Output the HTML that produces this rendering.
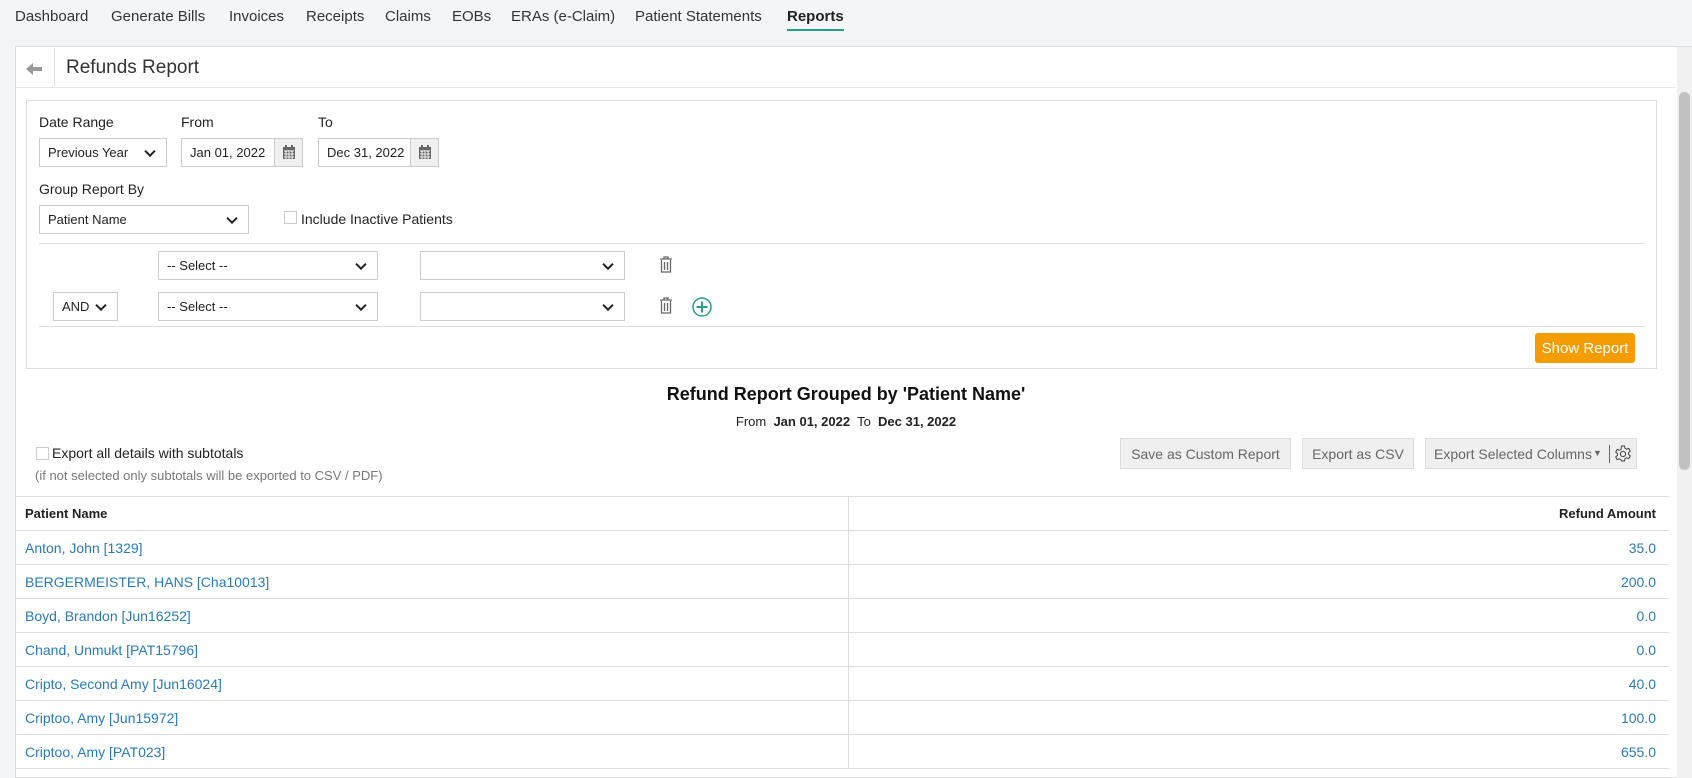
<!DOCTYPE html>
<html><head><meta charset="utf-8"><style>
*{box-sizing:border-box;margin:0;padding:0}
body{width:1692px;height:778px;overflow:hidden;background:#f4f5f7;font-family:"Liberation Sans",sans-serif;font-size:14px;color:#222;position:relative}
.a{position:absolute}
.nav span{position:absolute;top:8px;font-size:15px;color:#333}
.sel,.inp{position:absolute;border:1px solid #ccc;background:#fff;font-size:13px;color:#222;padding-left:8px;display:flex;align-items:center}
.sel:after{content:"";position:absolute;right:12px;top:50%;width:6px;height:6px;border-right:2px solid #222;border-bottom:2px solid #222;transform:translateY(-70%) rotate(45deg)}
.cal{position:absolute;right:0;top:0;bottom:0;width:28px;background:#f0f0f0;border-left:1px solid #ccc}
.btn{position:absolute;background:#efefef;border:1px solid #ddd;color:#666;font-size:14px;display:flex;align-items:center;justify-content:center}
.row{position:absolute;left:16px;width:1653px;height:34px;border-bottom:1px solid #ddd}
.row .n{position:absolute;left:9px;top:9px;color:#2a7ab5;font-size:14px}
.row .v{position:absolute;right:13px;top:9px;color:#2a7ab5;font-size:14px}
.row .d{position:absolute;left:832px;top:0;bottom:0;border-left:1px solid #ddd}
</style></head><body>
<div class="nav">
<span style="left:15px">Dashboard</span><span style="left:111px">Generate Bills</span><span style="left:229px">Invoices</span><span style="left:306px">Receipts</span><span style="left:385px">Claims</span><span style="left:452px">EOBs</span><span style="left:511px">ERAs (e-Claim)</span><span style="left:635px">Patient Statements</span><span style="left:787px;font-weight:bold;color:#222">Reports</span>
</div>
<div class="a" style="left:787px;top:29px;width:57px;height:2px;background:#2a9d8f"></div>
<div class="a" style="left:15px;top:46px;width:1677px;height:732px;background:#fff;border:1px solid #ddd"></div>
<div class="a" style="left:26px;top:62px;width:16px;height:12px"><svg width="16" height="12"><path d="M0 6L7 0V4H16V8H7V12Z" fill="#999"/></svg></div>
<div class="a" style="left:54px;top:48px;height:38px;border-left:1px solid #ddd"></div>
<div class="a" style="left:66px;top:57px;font-size:19px;color:#333">Refunds Report</div>
<div class="a" style="left:16px;top:87px;width:1660px;border-top:1px solid #e6e6e6"></div>
<div class="a" style="left:26px;top:100px;width:1631px;height:269px;border:1px solid #ddd"></div>
<div class="a" style="left:39px;top:114px;font-size:14px">Date Range</div>
<div class="a" style="left:181px;top:114px">From</div>
<div class="a" style="left:318px;top:114px">To</div>
<div class="sel" style="left:39px;top:138px;width:128px;height:29px">Previous Year</div>
<div class="inp" style="left:181px;top:138px;width:122px;height:29px">Jan 01, 2022<div class="cal"><svg width="28" height="27"><rect x="8" y="8" width="12" height="12" fill="#666"/><path d="M9 12h10M9 15h10M9 18h10M11 11v9M14 11v9M17 11v9" stroke="#f0f0f0"/><rect x="10" y="6" width="2" height="3" fill="#666"/><rect x="16" y="6" width="2" height="3" fill="#666"/></svg></div></div>
<div class="inp" style="left:318px;top:138px;width:121px;height:29px">Dec 31, 2022<div class="cal"><svg width="28" height="27"><rect x="8" y="8" width="12" height="12" fill="#666"/><path d="M9 12h10M9 15h10M9 18h10M11 11v9M14 11v9M17 11v9" stroke="#f0f0f0"/><rect x="10" y="6" width="2" height="3" fill="#666"/><rect x="16" y="6" width="2" height="3" fill="#666"/></svg></div></div>
<div class="a" style="left:39px;top:181px">Group Report By</div>
<div class="sel" style="left:39px;top:205px;width:210px;height:29px">Patient Name</div>
<div class="a" style="left:284px;top:211px;width:13px;height:13px;border:1px solid #ccc"></div>
<div class="a" style="left:301px;top:211px;font-size:14px">Include Inactive Patients</div>
<div class="a" style="left:39px;top:243px;width:1606px;border-top:1px solid #ddd"></div>
<div class="sel" style="left:158px;top:251px;width:220px;height:29px">-- Select --</div>
<div class="sel" style="left:420px;top:251px;width:205px;height:29px"></div>
<div class="sel" style="left:53px;top:292px;width:65px;height:29px">AND</div>
<div class="sel" style="left:158px;top:292px;width:220px;height:29px">-- Select --</div>
<div class="sel" style="left:420px;top:292px;width:205px;height:29px"></div>
<svg class="a" style="left:659px;top:256px" width="14" height="17"><path d="M1 3h12M5 3V1h4v2M2.5 4v12h9V4M5.5 6v8M8.5 6v8" stroke="#666" fill="none" stroke-width="1.3"/></svg>
<svg class="a" style="left:659px;top:297px" width="14" height="17"><path d="M1 3h12M5 3V1h4v2M2.5 4v12h9V4M5.5 6v8M8.5 6v8" stroke="#666" fill="none" stroke-width="1.3"/></svg>
<svg class="a" style="left:692px;top:297px" width="20" height="20"><circle cx="10" cy="10" r="9" stroke="#2a9d8f" fill="none" stroke-width="1.5"/><path d="M10 4.5v11M4.5 10h11" stroke="#2a9d8f" stroke-width="2"/></svg>
<div class="a" style="left:39px;top:326px;width:1606px;border-top:1px solid #ddd"></div>
<div class="a" style="left:1535px;top:333px;width:100px;height:30px;background:#f59c00;border-radius:3px;color:#fff;font-size:15px;display:flex;align-items:center;justify-content:center">Show Report</div>
<div class="a" style="left:0;width:1692px;top:384px;text-align:center;font-size:18px;font-weight:bold;color:#111">Refund Report Grouped by 'Patient Name'</div>
<div class="a" style="left:0;width:1692px;top:414px;text-align:center;font-size:13px">From &nbsp;<b>Jan 01, 2022</b>&nbsp; To &nbsp;<b>Dec 31, 2022</b></div>
<div class="a" style="left:36px;top:447px;width:13px;height:13px;border:1px solid #ccc"></div>
<div class="a" style="left:52px;top:445px;font-size:14px">Export all details with subtotals</div>
<div class="a" style="left:35px;top:468px;font-size:13px;color:#777">(if not selected only subtotals will be exported to CSV / PDF)</div>
<div class="btn" style="left:1120px;top:438px;width:171px;height:31px">Save as Custom Report</div>
<div class="btn" style="left:1302px;top:438px;width:112px;height:31px">Export as CSV</div>
<div class="btn" style="left:1425px;top:438px;width:212px;height:31px;justify-content:flex-start;padding-left:8px">Export Selected Columns<span style="position:absolute;left:167px;top:9px;font-size:9px">▼</span><span style="position:absolute;left:183px;top:6px;height:18px;border-left:1px solid #666"></span>
<svg style="position:absolute;left:188px;top:6px" width="18" height="18" viewBox="0 0 18 18"><path d="M7.5 1h3l.5 2.3 1.6.9 2.2-.8 1.5 2.6-1.7 1.6v1.8l1.7 1.6-1.5 2.6-2.2-.8-1.6.9-.5 2.3h-3L7 14.7l-1.6-.9-2.2.8-1.5-2.6 1.7-1.6V8.6L1.7 7 3.2 4.4l2.2.8L7 4.3z" fill="none" stroke="#444" stroke-width="1"/><circle cx="9" cy="9" r="2.6" fill="none" stroke="#444"/></svg></div>
<div class="a" style="left:16px;top:496px;width:1653px;border-top:1px solid #ddd"></div>
<div class="row" style="top:497px"><div class="n" style="color:#222;font-weight:bold;font-size:13px">Patient Name</div><div class="d"></div><div class="v" style="color:#222;font-weight:bold;font-size:13px">Refund Amount</div></div>
<div class="row" style="top:531px"><div class="n">Anton, John [1329]</div><div class="d"></div><div class="v">35.0</div></div>
<div class="row" style="top:565px"><div class="n">BERGERMEISTER, HANS [Cha10013]</div><div class="d"></div><div class="v">200.0</div></div>
<div class="row" style="top:599px"><div class="n">Boyd, Brandon [Jun16252]</div><div class="d"></div><div class="v">0.0</div></div>
<div class="row" style="top:633px"><div class="n">Chand, Unmukt [PAT15796]</div><div class="d"></div><div class="v">0.0</div></div>
<div class="row" style="top:667px"><div class="n">Cripto, Second Amy [Jun16024]</div><div class="d"></div><div class="v">40.0</div></div>
<div class="row" style="top:701px"><div class="n">Criptoo, Amy [Jun15972]</div><div class="d"></div><div class="v">100.0</div></div>
<div class="row" style="top:735px"><div class="n">Criptoo, Amy [PAT023]</div><div class="d"></div><div class="v">655.0</div></div>
<div class="a" style="left:1677px;top:47px;width:15px;height:731px;background:#f1f1f1"></div>
<div class="a" style="left:1679px;top:92px;width:11px;height:378px;background:#c1c1c1;border-radius:6px"></div>
</body></html>
